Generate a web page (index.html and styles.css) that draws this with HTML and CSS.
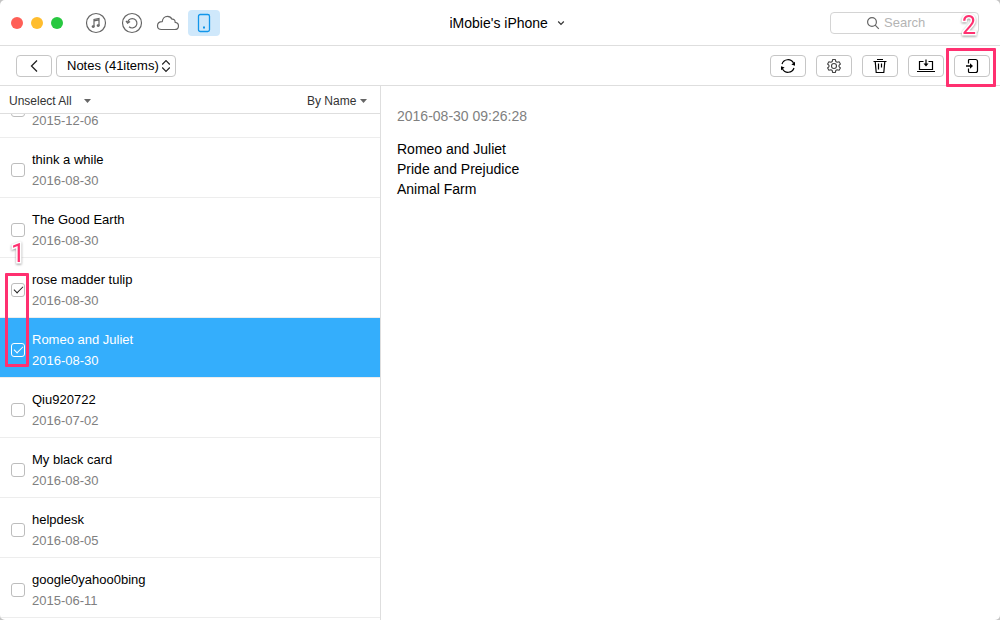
FILE: index.html
```html
<!DOCTYPE html>
<html lang="en">
<head>
<meta charset="utf-8">
<title>iMobie's iPhone</title>
<link rel="stylesheet" href="styles.css">
</head>
<body>
<div class="window">
  <header class="titlebar">
    <div class="titlebar-left">
      <div class="lights">
        <button class="light light-close" aria-label="Close"></button>
        <button class="light light-min" aria-label="Minimize"></button>
        <button class="light light-max" aria-label="Zoom"></button>
      </div>
      <nav class="sources">
        <button class="source" aria-label="iTunes library">
          <svg width="22" height="22" viewBox="0 0 22 22" fill="none" stroke="#666" stroke-width="1.2"><circle cx="11" cy="11" r="9.5"/><path d="M9 14.500V7.500l5-1v7M9 8.800l5-1"/><ellipse cx="8.200" cy="14.600" rx="1" ry=".7"/><ellipse cx="13.200" cy="13.600" rx="1" ry=".7"/></svg>
        </button>
        <button class="source" aria-label="Backups">
          <svg width="22" height="22" viewBox="0 0 22 22" fill="none" stroke="#666" stroke-width="1.2"><circle cx="11" cy="11" r="9.5"/><path d="M6.7 10A4.7 4.7 0 1 1 8 14.700M5 8.800l1.600 2.300 2.500-1.500"/></svg>
        </button>
        <button class="source" aria-label="iCloud">
          <svg width="24" height="22" viewBox="0 0 24 22" fill="none" stroke="#666" stroke-width="1.2" stroke-linejoin="round"><path d="M5.500 17.500h13c2.400 0 4-1.500 4-3.600 0-2-1.400-3.400-3.400-3.600.2-2-1.100-3.300-3.100-3.100C15.100 5.300 13.400 4.300 11.500 4.300c-3 0-5.100 2.300-5.200 5.300C3.300 9.600 1.500 11.400 1.500 13.700c0 2.200 1.600 3.800 4 3.800z"/></svg>
        </button>
        <button class="source source-active" aria-label="Device">
          <svg width="14" height="20" viewBox="0 0 14 20" fill="none" stroke="#1296ea" stroke-width="1.300"><rect x="1.500" y="1.500" width="11" height="17" rx="1.800"/><rect x="6" y="13.500" width="2" height="2" fill="#1296ea" stroke="none"/></svg>
        </button>
      </nav>
    </div>
    <label class="picker picker-device">
      <select aria-label="Device"><option>iMobie's iPhone</option></select>
      <svg width="8" height="6" viewBox="0 0 8 6" fill="none" stroke="#333" stroke-width="1.200"><path d="M1.200 1.500L4 4.300l2.800-2.800"/></svg>
    </label>
    <div class="titlebar-right">
      <label class="search">
        <svg width="14" height="14" viewBox="0 0 14 14" fill="none" stroke="#666" stroke-width="1.200"><circle cx="6" cy="6" r="4.400"/><path d="M9.200 9.200l3.600 3.600"/></svg>
        <input type="search" placeholder="Search" aria-label="Search">
      </label>
    </div>
  </header>

  <div class="toolbar">
    <button class="tool" aria-label="Back">
      <svg width="10" height="14" viewBox="0 0 10 14" fill="none" stroke="#222" stroke-width="1.300"><path d="M8 1.500L2.500 7 8 12.500"/></svg>
    </button>
    <label class="picker picker-category">
      <select aria-label="Category"><option>Notes (41items)</option></select>
      <svg width="10" height="14" viewBox="0 0 10 14" fill="none" stroke="#222" stroke-width="1.200"><path d="M1.200 5.500L5 1.700l3.800 3.800M1.200 8.500L5 12.300l3.800-3.800"/></svg>
    </label>
    <div class="actions">
      <button class="tool" aria-label="Refresh">
        <svg width="16" height="16" viewBox="0 0 16 16" fill="none" stroke="#000" stroke-width="1.200"><path d="M2 6A6.300 6.300 0 0 1 13.500 5M14 10A6.300 6.300 0 0 1 2.500 11"/><path d="M15 3.800v4l-3.600-1.400zM1 12.200v-4l3.600 1.400z" fill="#000" stroke="none"/></svg>
      </button>
      <button class="tool" aria-label="Settings">
        <svg width="16" height="16" viewBox="0 0 16 16" fill="none" stroke="#444" stroke-width="1.100" stroke-linejoin="round"><path d="M6.700 1.500h2.600l.5 2 1.300.8 2-.6 1.300 2.300L13 7.400v1.200l1.400 1.400-1.300 2.300-2-.6-1.300.8-.5 2H6.700l-.5-2-1.300-.8-2 .6L1.600 10 3 8.600V7.400L1.600 6l1.300-2.300 2 .6 1.300-.8z"/><circle cx="8" cy="8" r="2.500"/></svg>
      </button>
      <button class="tool" aria-label="Delete">
        <svg width="16" height="16" viewBox="0 0 16 16" fill="none" stroke="#000" stroke-width="1.200"><path d="M1.500 3.500h13M5 1.500h6M3.200 3.500l1 11h7.600l1-11M6.500 5.500v6M9.500 5.500v4"/></svg>
      </button>
      <button class="tool" aria-label="To computer">
        <svg width="18" height="16" viewBox="0 0 18 16" fill="none" stroke="#000" stroke-width="1.200"><path d="M6.500 3.500h-4v8h13v-8h-4M0 13.500h18M9 1.500v5"/><path d="M6.500 5.500h5L9 8.500z" fill="#000" stroke="none"/></svg>
      </button>
      <button class="tool" aria-label="To device">
        <svg width="16" height="16" viewBox="0 0 16 16" fill="none" stroke="#000" stroke-width="1.200"><path d="M4.500 5.500v-3q0-1 1-1h6q2 0 2 2v9q0 2-2 2h-6q-1 0-1-1v-3"/><path d="M2 8h5" stroke-width="1.600"/><path d="M6 5.300L9 8l-3 2.700z" fill="#000" stroke="none"/></svg>
        <span class="mark mark-action"></span>
        <span class="number number-two">2</span>
      </button>
    </div>
  </div>

  <main class="content">
    <section class="sidebar">
      <div class="list-head">
        <label class="picker picker-select">
          <select aria-label="Selection"><option>Unselect All</option></select>
          <svg width="7" height="4" viewBox="0 0 7 4" fill="#666"><path d="M0 0h7L3.500 4z"/></svg>
        </label>
        <label class="picker picker-sort">
          <select aria-label="Sort"><option>By Name</option></select>
          <svg width="7" height="4" viewBox="0 0 7 4" fill="#666"><path d="M0 0h7L3.500 4z"/></svg>
        </label>
      </div>
      <div class="list">
        <ul class="notes">
          <li><label class="note"><input type="checkbox"><span class="note-text"><span class="note-name">&nbsp;</span><span class="note-date">2015-12-06</span></span></label></li>
          <li><label class="note"><input type="checkbox"><span class="note-text"><span class="note-name">think a while</span><span class="note-date">2016-08-30</span></span></label></li>
          <li><label class="note"><input type="checkbox"><span class="note-text"><span class="note-name">The Good Earth</span><span class="note-date">2016-08-30</span></span></label></li>
          <li><label class="note"><span class="mark mark-checks"></span><span class="number number-one">1</span><input type="checkbox" checked><span class="note-text"><span class="note-name">rose madder tulip</span><span class="note-date">2016-08-30</span></span></label></li>
          <li><label class="note note-active"><input type="checkbox" checked><span class="note-text"><span class="note-name">Romeo and Juliet</span><span class="note-date">2016-08-30</span></span></label></li>
          <li><label class="note"><input type="checkbox"><span class="note-text"><span class="note-name">Qiu920722</span><span class="note-date">2016-07-02</span></span></label></li>
          <li><label class="note"><input type="checkbox"><span class="note-text"><span class="note-name">My black card</span><span class="note-date">2016-08-30</span></span></label></li>
          <li><label class="note"><input type="checkbox"><span class="note-text"><span class="note-name">helpdesk</span><span class="note-date">2016-08-05</span></span></label></li>
          <li><label class="note"><input type="checkbox"><span class="note-text"><span class="note-name">google0yahoo0bing</span><span class="note-date">2015-06-11</span></span></label></li>
        </ul>
      </div>
    </section>
    <article class="detail">
      <time class="detail-date">2016-08-30 09:26:28</time>
      <p class="detail-body">Romeo and Juliet<br>Pride and Prejudice<br>Animal Farm</p>
    </article>
  </main>
</div>
</body>
</html>
```

FILE: styles.css
```css
* { box-sizing: border-box; }

body {
  margin: 0;
  background: #c4c4c4;
  color: #000;
  font: 13px/20px "Liberation Sans", Arial, sans-serif;
}

button, select, input { font: inherit; color: inherit; margin: 0; }
button { padding: 0; border: 0; background: none; }
svg { display: block; flex: none; }

.window {
  display: flex;
  flex-direction: column;
  height: 100vh;
  overflow: hidden;
  border-radius: 5px;
  background: #fff;
}

.titlebar {
  display: grid;
  grid-template-columns: 1fr auto 1fr;
  align-items: center;
  flex: none;
  padding: 0 21px 0 11px;
  height: 46px;
  border-bottom: 1px solid #dedede;
}
.titlebar-left { display: flex; align-items: center; gap: 17px; }
.titlebar-right { display: flex; justify-content: flex-end; }

.lights { display: flex; gap: 8px; }
.light { width: 12px; height: 12px; border-radius: 50%; }
.light-close { background: #ff5f57; }
.light-min { background: #ffbd2e; }
.light-max { background: #28c840; }

.sources { display: flex; align-items: center; gap: 4px; }
.source {
  display: flex;
  align-items: center;
  justify-content: center;
  width: 32px;
  height: 26px;
  border-radius: 4px;
}
.source-active { background: #cfe8fb; }

.picker { display: inline-grid; align-items: center; }
.picker > * { grid-area: 1 / 1; }
.picker select {
  appearance: none;
  padding: 0;
  border: 0;
  background: none;
}
.picker svg { justify-self: end; pointer-events: none; }

.picker-device { padding-left: 24px; font-size: 14px; }
.picker-device select { padding-right: 16px; }

.picker-category select {
  height: 22px;
  padding: 0 16px 0 10px;
  border: 1px solid #c6c6c6;
  border-radius: 4px;
}
.picker-category svg { margin-right: 5px; }

.picker-select, .picker-sort { font-size: 12px; color: #333; }
.picker-select select { padding-right: 18px; }
.picker-sort select { padding-right: 10px; }

.search {
  display: flex;
  align-items: center;
  gap: 4px;
  width: 149px;
  height: 22px;
  padding-left: 35px;
  border: 1px solid #d4d4d4;
  border-radius: 4px;
}
.search input {
  flex: 1;
  min-width: 0;
  height: 20px;
  padding: 1px 0 0;
  border: 0;
  outline: 0;
  background: none;
  appearance: none;
}
.search input::placeholder { color: #b4b4b4; opacity: 1; }

.toolbar {
  display: flex;
  align-items: center;
  flex: none;
  gap: 4px;
  height: 40px;
  padding: 0 10px 0 16px;
  border-bottom: 1px solid #dedede;
}
.actions { display: flex; gap: 10px; margin-left: auto; }
.tool {
  position: relative;
  display: flex;
  align-items: center;
  justify-content: center;
  width: 36px;
  height: 22px;
  border: 1px solid #c6c6c6;
  border-radius: 4px;
}

.content { display: flex; flex: 1; min-height: 0; }
.sidebar {
  display: flex;
  flex-direction: column;
  flex: 0 0 38.1%;
  border-right: 1px solid #dedede;
}
.list-head {
  display: flex;
  align-items: center;
  justify-content: space-between;
  flex: none;
  height: 28px;
  padding: 2px 13px 0 9px;
  border-bottom: 1px solid #dedede;
}
.list {
  display: flex;
  flex-direction: column;
  flex: 1;
  min-height: 0;
  overflow: hidden;
}
.notes { margin: -36px 0 0; padding: 0; list-style: none; }
.note {
  position: relative;
  display: flex;
  align-items: center;
  gap: 7px;
  height: 60px;
  padding: 4px 11px 0;
  border-bottom: 1px solid #ededed;
}
.note input {
  appearance: none;
  display: grid;
  place-items: center;
  flex: none;
  width: 14px;
  height: 14px;
  border: 1px solid #bdbdbd;
  border-radius: 3px;
  background: #fff;
}
.note input:checked::before {
  content: "";
  width: 8px;
  height: 4px;
  margin-bottom: 2px;
  border: solid #222;
  border-width: 0 0 1px 1px;
  transform: rotate(-45deg);
}
.note-text { display: flex; flex-direction: column; gap: 1px; padding-top: 2px; }
.note-date { color: #808080; }
.note-active { background: #34aefc; color: #fff; }
.note-active .note-date { color: #fff; }
.note-active input { background: transparent; border-color: #fff; }
.note-active input:checked::before { border-color: #fff; }

.detail {
  display: flex;
  flex-direction: column;
  flex: 1;
  gap: 13px;
  padding: 20px 16px;
  font-size: 14px;
}
.detail-date { color: #808080; }
.detail-body { margin: 0; }

/* Step markers laid over the interface */
.mark {
  position: absolute;
  z-index: 2;
  border: 3px solid #ff3070;
  border-radius: 1px;
  pointer-events: none;
}
.mark-action { inset: -8px -7px -11px -9px; }
.mark-checks { top: 15px; left: 5px; width: 24px; height: 94px; }
.number {
  position: absolute;
  z-index: 2;
  color: #ff3070;
  font: 400 25px/25px Roboto, sans-serif;
  -webkit-text-stroke: 3px #fff;
  paint-order: stroke fill;
  filter: drop-shadow(0 1px 1px #999);
}
.number-one { top: -17px; left: 11px; }
.number-two { top: -43px; left: 7px; }
```
